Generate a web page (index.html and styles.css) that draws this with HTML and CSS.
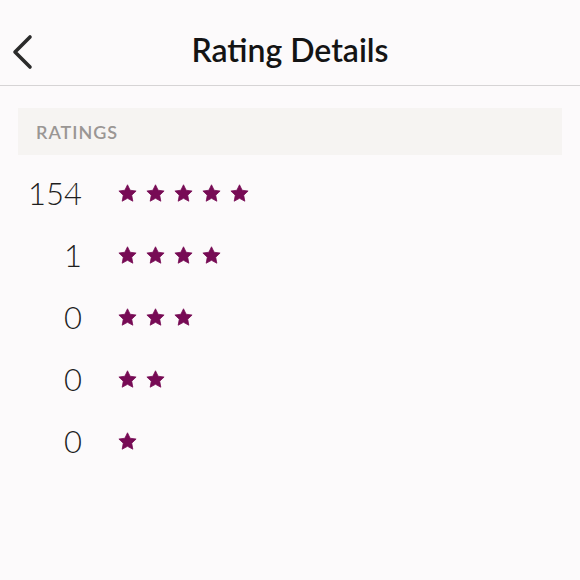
FILE: index.html
```html
<!DOCTYPE html>
<html>
<head>
<meta charset="utf-8">
<link rel="stylesheet" href="styles.css">
</head>
<body>
<div class="page">
  <header class="topbar">
    <span class="back">
      <svg width="24" height="36" viewBox="0 0 24 36"><path d="M19 3 L4 18 L19 33" fill="none" stroke="#2b2b2b" stroke-width="3.6" stroke-linecap="round" stroke-linejoin="round"/></svg>
    </span>
    <h1 class="title">Rating Details</h1>
  </header>
  <section class="section">
    <div class="section-head">RATINGS</div>
    <div class="rows">
      <div class="row"><span class="count">154</span><span class="stars" data-n="5"></span></div>
      <div class="row"><span class="count">1</span><span class="stars" data-n="4"></span></div>
      <div class="row"><span class="count">0</span><span class="stars" data-n="3"></span></div>
      <div class="row"><span class="count">0</span><span class="stars" data-n="2"></span></div>
      <div class="row"><span class="count">0</span><span class="stars" data-n="1"></span></div>
    </div>
  </section>
</div>
<script>
document.querySelectorAll('.stars').forEach(function(el){
  var n = +el.getAttribute('data-n');
  var s = '';
  for (var i = 0; i < n; i++) {
    s += '<svg class="star" width="19" height="18" viewBox="0 0 24 23"><path d="M12 1 L15.4 8 L23 9 L17.4 14.3 L18.8 22 L12 18.3 L5.2 22 L6.6 14.3 L1 9 L8.6 8 Z" fill="#770b55" stroke="#770b55" stroke-width="1" stroke-linejoin="round"/></svg>';
  }
  el.innerHTML = s;
});
</script>
</body>
</html>
```

FILE: styles.css
```css
html, body {
  margin: 0;
  padding: 0;
  background: #fcfafb;
}
.page {
  width: 580px;
  height: 580px;
  font-family: "Lato", "Noto Sans", sans-serif;
  color: #222;
}
.topbar {
  position: relative;
  height: 85px;
  border-bottom: 1px solid #d6d4d5;
  display: flex;
  align-items: center;
  justify-content: center;
}
.back {
  position: absolute;
  left: 11px;
  top: 34px;
  display: block;
  line-height: 0;
}
.title {
  margin: 0;
  font-size: 32px;
  font-weight: 600;
  color: #141414;
  padding-top: 14px;
}
.section {
  padding: 22px 18px 0;
}
.section-head {
  height: 47px;
  background: #f6f4f2;
  display: flex;
  align-items: center;
  padding-left: 18px;
  font-size: 18px;
  letter-spacing: 1px;
  color: #9a9694;
  font-weight: 600;
}
.rows {
  padding-top: 7px;
}
.row {
  height: 62px;
  display: flex;
  align-items: center;
}
.count {
  width: 64px;
  text-align: right;
  font-size: 31px;
  font-weight: 300;
  color: #1e1e1e;
}
.stars {
  display: flex;
  gap: 9px;
  margin-left: 36px;
}
.star {
  display: block;
}
```
